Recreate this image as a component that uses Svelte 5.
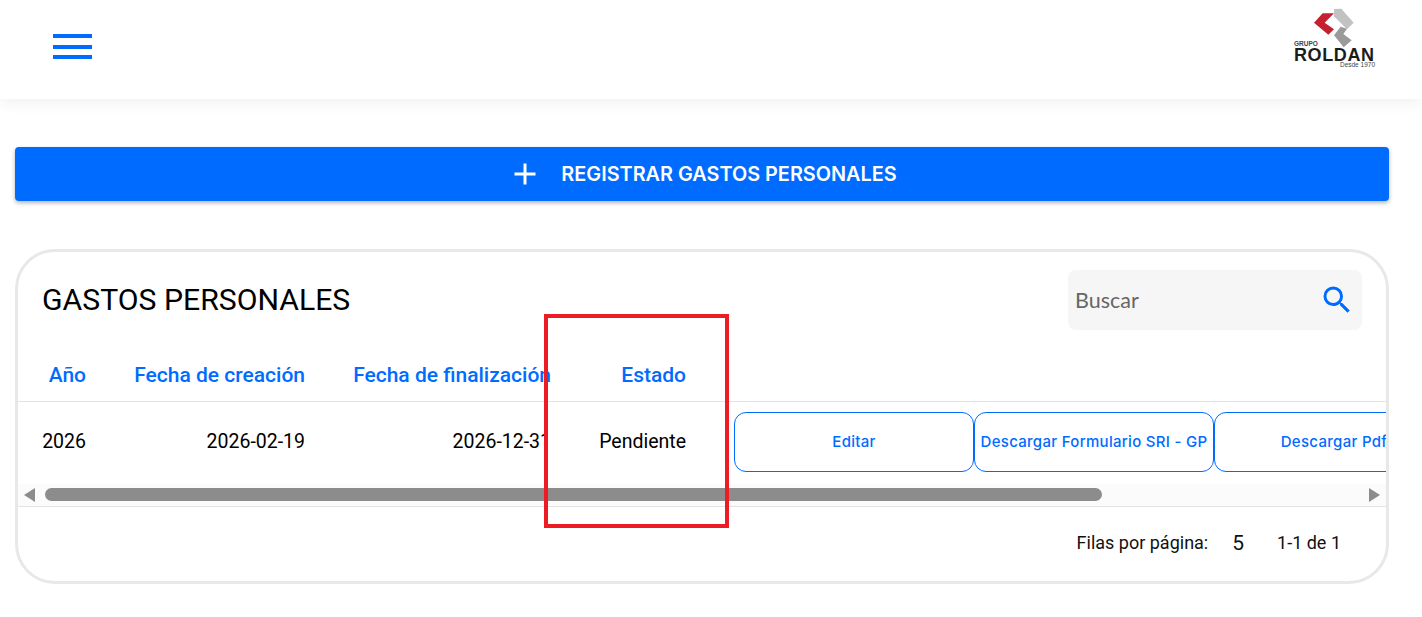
<script>
  const columns = ['Año', 'Fecha de creación', 'Fecha de finalización', 'Estado'];
  const cells = ['2026', '2026-02-19', '2026-12-31', 'Pendiente'];
  const actions = ['Editar', 'Descargar Formulario SRI - GP', 'Descargar Pdf'];
</script>

<div class="page">
  <header class="topbar">
    <button class="menu" aria-label="Menú">
      <span></span><span></span><span></span>
    </button>
    <div class="logo">
      <svg class="mark" viewBox="0 0 138 132" width="46" height="44" aria-hidden="true">
        <path d="M38 22 L72 22 L44 50 L72 70 L55 86 L12 50 Z" fill="#c4202e" />
        <path d="M72 9 L94 8 L131 50 L111 70 L72 31 Z" fill="#c2c2c2" />
        <path d="M111 68 L92 62 L72 88 L101 124 L125 103 L100 84 Z" fill="#9a9a9a" />
      </svg>
      <div class="grupo">GRUPO</div>
      <div class="roldan">ROLDAN</div>
      <div class="desde">Desde 1970</div>
    </div>
  </header>

  <main class="content">
    <button class="register">
      <svg viewBox="0 0 24 24" width="24" height="24" aria-hidden="true">
        <path d="M12 1.5v21M1.5 12h21" stroke="#fff" stroke-width="3" fill="none" />
      </svg>
      <span>REGISTRAR GASTOS PERSONALES</span>
    </button>

    <section class="card">
      <div class="card-head">
        <h2>GASTOS PERSONALES</h2>
        <div class="search">
          <span>Buscar</span>
          <svg viewBox="0 0 24 24" width="36" height="36" aria-hidden="true">
            <path fill="#006cff" d="M15.5 14h-.79l-.28-.27A6.47 6.47 0 0 0 16 9.5 6.5 6.5 0 1 0 9.5 16c1.61 0 3.09-.59 4.23-1.57l.27.28v.79l5 4.99L20.49 19l-4.99-5zm-6 0C7.01 14 5 11.99 5 9.5S7.01 5 9.5 5 14 7.01 14 9.5 11.99 14 9.5 14z" />
          </svg>
        </div>
      </div>

      <div class="table">
        <div class="row head">
          {#each columns as c}
            <div class="cell">{c}</div>
          {/each}
        </div>
        <div class="row body">
          {#each cells as c}
            <div class="cell">{c}</div>
          {/each}
          <div class="actions">
            {#each actions as a}
              <button class="action">{a}</button>
            {/each}
          </div>
        </div>
      </div>

      <div class="scrollbar">
        <span class="arrow left"></span>
        <div class="track"><div class="thumb"></div></div>
        <span class="arrow right"></span>
      </div>

      <footer class="pager">
        <span>Filas por página:</span>
        <span class="size">5</span>
        <span>1-1 de 1</span>
      </footer>
    </section>
  </main>

  <div class="annotation"></div>
</div>

<style>
  :global(body) {
    margin: 0;
    background: #fff;
    font-family: Roboto, sans-serif;
    color: #000;
  }
  .page {
    position: relative;
    height: 617px;
    overflow: hidden;
  }
  button {
    font: inherit;
    cursor: pointer;
  }
  .topbar {
    height: 99px;
    box-sizing: border-box;
    display: flex;
    align-items: center;
    justify-content: space-between;
    padding: 0 47px 6px 53px;
    box-shadow: 0 4px 14px rgba(0, 0, 0, 0.06);
    background: #fff;
  }
  .menu {
    width: 39px;
    display: flex;
    flex-direction: column;
    gap: 6.5px;
    padding: 0;
    border: 0;
    background: none;
  }
  .menu span {
    height: 4px;
    background: #006cff;
    display: block;
  }
  .logo {
    width: 81px;
    align-self: flex-start;
    margin-top: 6px;
    display: flex;
    flex-direction: column;
  }
  .mark {
    display: block;
    margin-left: 16px;
    flex: none;
  }
  .grupo {
    margin-top: -10px;
    font: 700 6.5px/8px "Liberation Sans", sans-serif;
    color: #444;
  }
  .roldan {
    font: 700 18px/16px "Liberation Sans", sans-serif;
    letter-spacing: 0.6px;
    white-space: nowrap;
    color: #1c1c1c;
    margin-top: -1px;
  }
  .desde {
    font: 400 6.5px/8px "Liberation Sans", sans-serif;
    text-align: right;
    color: #444;
    margin-top: -2px;
  }
  .content {
    padding: 48px 33px 0 15px;
  }
  .register {
    width: 100%;
    height: 54px;
    display: flex;
    align-items: center;
    justify-content: center;
    gap: 24px;
    border: 0;
    border-radius: 4px;
    padding: 0 0 0 6px;
    background: #006cff;
    color: #fff;
    font-family: Inter, sans-serif;
    font-size: 19.85px;
    font-weight: 600;
    box-shadow: 0 2px 4px rgba(0, 0, 0, 0.3);
  }
  .card {
    margin-top: 48px;
    height: 335px;
    box-sizing: border-box;
    border: 3px solid #e8e8e8;
    border-radius: 40px;
    overflow: hidden;
    display: flex;
    flex-direction: column;
  }
  .card-head {
    height: 94px;
    flex: none;
    box-sizing: border-box;
    display: flex;
    align-items: flex-start;
    justify-content: space-between;
    padding: 18px 24px 0 24px;
  }
  h2 {
    margin: 0;
    font-size: 30.2px;
    font-weight: 400;
    line-height: 60px;
  }
  .search {
    width: 294px;
    height: 60px;
    box-sizing: border-box;
    display: flex;
    align-items: center;
    justify-content: space-between;
    padding: 0 7px;
    background: #f6f6f6;
    border-radius: 8px;
    font-family: Lato, sans-serif;
    font-size: 21.5px;
    color: #666;
  }
  .table {
    overflow: hidden;
    flex: none;
  }
  .row {
    display: grid;
    grid-template-columns: 68px 219px 246px 135px 1fr;
  }
  .head {
    height: 56px;
    align-items: center;
    padding-top: 3px;
    box-sizing: border-box;
    border-bottom: 1px solid #e3e3e3;
    color: #006cff;
    font-size: 21px;
    font-weight: 500;
  }
  .body {
    height: 82px;
    align-items: center;
    font-size: 19.5px;
  }
  .body .cell {
    padding-bottom: 3px;
  }
  .cell {
    text-align: right;
    white-space: nowrap;
  }
  .actions {
    display: flex;
    margin-left: 48px;
    height: 60px;
    margin-top: -3px;
  }
  .action {
    flex: none;
    width: 240px;
    height: 60px;
    padding: 0;
    box-sizing: border-box;
    border: 1px solid #006cff;
    border-radius: 12px;
    background: #fff;
    color: #006cff;
    font-family: Inter, sans-serif;
    font-size: 15px;
    letter-spacing: 0.3px;
    font-weight: 500;
    white-space: nowrap;
  }
  .scrollbar {
    height: 23px;
    flex: none;
    box-sizing: border-box;
    border-bottom: 1px solid #e3e3e3;
    background: #fbfbfb;
    display: flex;
    align-items: center;
    padding: 0 6px;
    gap: 10px;
  }
  .track {
    flex: 1;
    padding-right: 257px;
  }
  .thumb {
    height: 13px;
    margin-top: -1px;
    border-radius: 7px;
    background: #8c8c8c;
  }
  .arrow {
    width: 0;
    height: 0;
    margin-top: -1px;
    border-top: 7px solid transparent;
    border-bottom: 7px solid transparent;
  }
  .arrow.left {
    border-right: 11px solid #8c8c8c;
  }
  .arrow.right {
    border-left: 11px solid #8c8c8c;
  }
  .pager {
    flex: 1;
    display: flex;
    align-items: center;
    justify-content: flex-end;
    padding: 0 45px 3px 0;
    font-size: 18px;
    color: #111;
  }
  .size {
    margin: 0 33px 0 24px;
    font-size: 21px;
  }
  .annotation {
    position: absolute;
    left: 544px;
    top: 314px;
    width: 185px;
    height: 214px;
    box-sizing: border-box;
    border: 4px solid #ed1c24;
    pointer-events: none;
  }
</style>
